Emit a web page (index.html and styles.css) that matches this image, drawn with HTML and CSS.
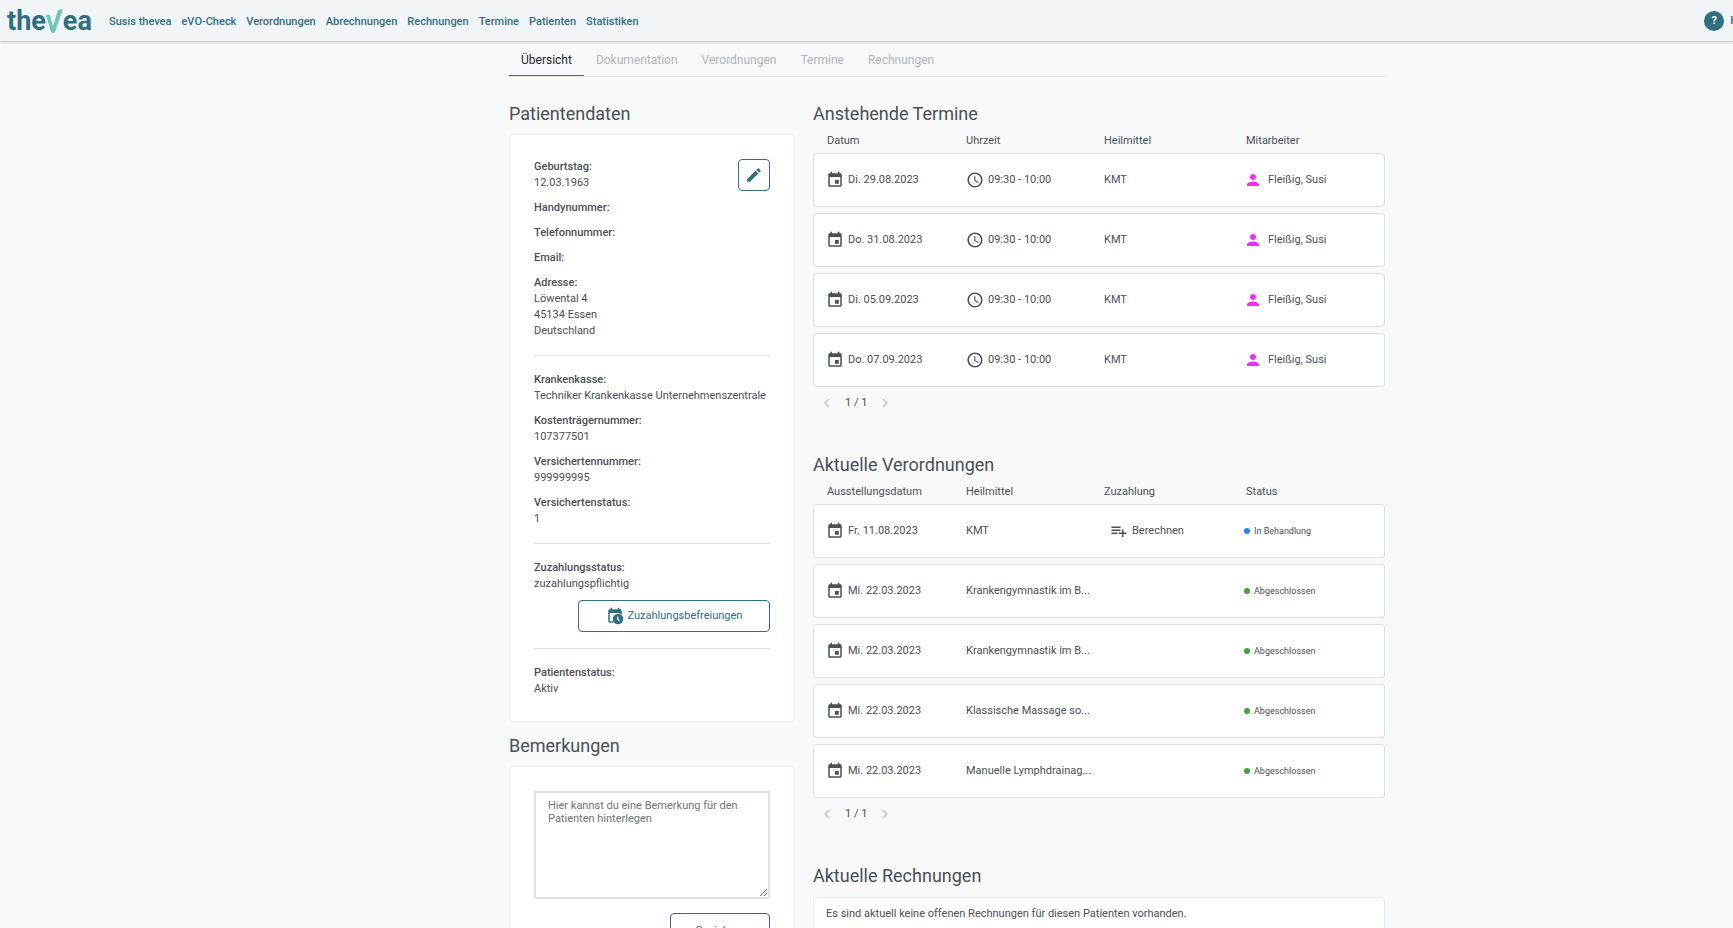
FILE: index.html
```html
<!DOCTYPE html>
<html lang="de">

<head>
    <meta charset="UTF-8">
    <meta name="viewport" content="width=device-width, initial-scale=1.0">
    <title>thevea - Patient</title>
    <link rel="stylesheet" href="styles.css">
</head>

<body>
    <!-- icon sprite -->
    <svg class="sprite" aria-hidden="true">
        <symbol id="calendar" viewBox="0 0 24 24">
            <path d="M17 12h-5v5h5v-5zM16 1v2H8V1H6v2H5c-1.11 0-1.99.9-1.99 2L3 19c0 1.1.89 2 2 2h14c1.1 0 2-.9 2-2V5c0-1.1-.9-2-2-2h-1V1h-2zm3 18H5V8h14v11z" />
        </symbol>
        <symbol id="clock" viewBox="0 0 24 24">
            <path d="M11.99 2C6.47 2 2 6.48 2 12s4.47 10 9.99 10C17.52 22 22 17.52 22 12S17.52 2 11.99 2zM12 20c-4.42 0-8-3.58-8-8s3.58-8 8-8 8 3.58 8 8-3.58 8-8 8zm.5-13H11v6l5.25 3.15.75-1.23-4.5-2.67z" />
        </symbol>
        <symbol id="person" viewBox="0 0 24 24">
            <path d="M12 12c2.21 0 4-1.79 4-4s-1.79-4-4-4-4 1.79-4 4 1.79 4 4 4zm0 2c-2.67 0-8 1.34-8 4v2h16v-2c0-2.66-5.33-4-8-4z" />
        </symbol>
        <symbol id="pencil" viewBox="0 0 24 24">
            <path d="M3 17.25V21h3.75L17.81 9.94l-3.75-3.75L3 17.25zM20.71 7.04c.39-.39.39-1.02 0-1.41l-2.34-2.34c-.39-.39-1.02-.39-1.41 0l-1.83 1.83 3.75 3.75 1.83-1.83z" />
        </symbol>
        <symbol id="playlist" viewBox="0 0 24 24">
            <path d="M14 10H2v2h12v-2zm0-4H2v2h12V6zm4 8v-4h-2v4h-4v2h4v4h2v-4h4v-2h-4zM2 16h8v-2H2v2z" />
        </symbol>
        <symbol id="calendar-clock" viewBox="0 0 24 24">
            <path d="M5 8v11h5v2H5c-1.1 0-2-.9-2-2V5c0-1.1.9-2 2-2h1V1h2v2h8V1h2v2h1c1.1 0 2 .9 2 2v5h-2V8z" />
            <circle cx="16" cy="16" r="7" />
            <path d="M15.7 12.5v4l3 1.7" fill="none" stroke="#fff" stroke-width="1.5" />
        </symbol>
        <symbol id="left" viewBox="0 0 24 24">
            <path d="M15.41 7.41L14 6l-6 6 6 6 1.41-1.41L10.83 12z" />
        </symbol>
        <symbol id="right" viewBox="0 0 24 24">
            <path d="M10 6L8.59 7.41 13.17 12l-4.58 4.59L10 18l6-6z" />
        </symbol>
    </svg>

    <header class="topbar">
        <a class="logo" href="#" aria-label="thevea">
            <span>the</span><svg class="logo-check" viewBox="0 0 17 24"><path d="M0 6h4l3 11L12 1l5-1-8 23q-2 2-4 0z" /></svg><span>ea</span>
        </a>
        <nav class="main-nav">
            <a href="#">Susis thevea</a>
            <a href="#">eVO-Check</a>
            <a href="#">Verordnungen</a>
            <a href="#">Abrechnungen</a>
            <a href="#">Rechnungen</a>
            <a href="#">Termine</a>
            <a href="#">Patienten</a>
            <a href="#">Statistiken</a>
        </nav>
        <a class="help" href="#"><span class="help-icon">?</span>H</a>
    </header>

    <main class="page">
        <div class="content">
            <nav class="tabs">
                <a class="active" href="#">Übersicht</a>
                <a href="#">Dokumentation</a>
                <a href="#">Verordnungen</a>
                <a href="#">Termine</a>
                <a href="#">Rechnungen</a>
            </nav>

            <div class="columns">
                <div class="sidebar">
                    <h2>Patientendaten</h2>
                    <section class="card">
                        <button class="btn edit" type="button" aria-label="Bearbeiten"><svg class="icon"><use href="#pencil" /></svg></button>
                        <dl>
                            <div><dt>Geburtstag:</dt><dd>12.03.1963</dd></div>
                            <div><dt>Handynummer:</dt></div>
                            <div><dt>Telefonnummer:</dt></div>
                            <div><dt>Email:</dt></div>
                            <div><dt>Adresse:</dt><dd>Löwental 4</dd><dd>45134 Essen</dd><dd>Deutschland</dd></div>
                        </dl>
                        <hr>
                        <dl>
                            <div><dt>Krankenkasse:</dt><dd>Techniker Krankenkasse Unternehmenszentrale</dd></div>
                            <div><dt>Kostenträgernummer:</dt><dd>107377501</dd></div>
                            <div><dt>Versichertennummer:</dt><dd>999999995</dd></div>
                            <div><dt>Versichertenstatus:</dt><dd>1</dd></div>
                        </dl>
                        <hr>
                        <dl>
                            <div><dt>Zuzahlungsstatus:</dt><dd>zuzahlungspflichtig</dd></div>
                        </dl>
                        <button class="btn exemption" type="button"><svg class="icon"><use href="#calendar-clock" /></svg>Zuzahlungsbefreiungen</button>
                        <hr>
                        <dl>
                            <div><dt>Patientenstatus:</dt><dd>Aktiv</dd></div>
                        </dl>
                    </section>

                    <h2>Bemerkungen</h2>
                    <section class="card">
                        <textarea aria-label="Bemerkungen" placeholder="Hier kannst du eine Bemerkung für den Patienten hinterlegen"></textarea>
                        <button class="btn save" type="button">Speichern</button>
                    </section>
                </div>

                <div class="lists">
                    <section class="list">
                        <h2>Anstehende Termine</h2>
                        <table>
                            <thead>
                                <tr><th>Datum</th><th>Uhrzeit</th><th>Heilmittel</th><th>Mitarbeiter</th></tr>
                            </thead>
                            <tbody>
                                <tr>
                                    <td><span class="cell date"><svg class="icon"><use href="#calendar" /></svg>Di. 29.08.2023</span></td>
                                    <td><span class="cell"><svg class="icon"><use href="#clock" /></svg>09:30 - 10:00</span></td>
                                    <td>KMT</td>
                                    <td><span class="cell person"><svg class="icon"><use href="#person" /></svg>Fleißig, Susi</span></td>
                                </tr>
                                <tr>
                                    <td><span class="cell date"><svg class="icon"><use href="#calendar" /></svg>Do. 31.08.2023</span></td>
                                    <td><span class="cell"><svg class="icon"><use href="#clock" /></svg>09:30 - 10:00</span></td>
                                    <td>KMT</td>
                                    <td><span class="cell person"><svg class="icon"><use href="#person" /></svg>Fleißig, Susi</span></td>
                                </tr>
                                <tr>
                                    <td><span class="cell date"><svg class="icon"><use href="#calendar" /></svg>Di. 05.09.2023</span></td>
                                    <td><span class="cell"><svg class="icon"><use href="#clock" /></svg>09:30 - 10:00</span></td>
                                    <td>KMT</td>
                                    <td><span class="cell person"><svg class="icon"><use href="#person" /></svg>Fleißig, Susi</span></td>
                                </tr>
                                <tr>
                                    <td><span class="cell date"><svg class="icon"><use href="#calendar" /></svg>Do. 07.09.2023</span></td>
                                    <td><span class="cell"><svg class="icon"><use href="#clock" /></svg>09:30 - 10:00</span></td>
                                    <td>KMT</td>
                                    <td><span class="cell person"><svg class="icon"><use href="#person" /></svg>Fleißig, Susi</span></td>
                                </tr>
                            </tbody>
                        </table>
                        <div class="pager">
                            <button type="button" aria-label="Zurück" disabled><svg class="icon"><use href="#left" /></svg></button>
                            <span>1 / 1</span>
                            <button type="button" aria-label="Weiter" disabled><svg class="icon"><use href="#right" /></svg></button>
                        </div>
                    </section>

                    <section class="list">
                        <h2>Aktuelle Verordnungen</h2>
                        <table>
                            <thead>
                                <tr><th>Ausstellungsdatum</th><th>Heilmittel</th><th>Zuzahlung</th><th>Status</th></tr>
                            </thead>
                            <tbody>
                                <tr>
                                    <td><span class="cell date"><svg class="icon"><use href="#calendar" /></svg>Fr. 11.08.2023</span></td>
                                    <td>KMT</td>
                                    <td><button class="calculate" type="button"><svg class="icon"><use href="#playlist" /></svg>Berechnen</button></td>
                                    <td><span class="status open">In Behandlung</span></td>
                                </tr>
                                <tr>
                                    <td><span class="cell date"><svg class="icon"><use href="#calendar" /></svg>Mi. 22.03.2023</span></td>
                                    <td>Krankengymnastik im B...</td>
                                    <td></td>
                                    <td><span class="status">Abgeschlossen</span></td>
                                </tr>
                                <tr>
                                    <td><span class="cell date"><svg class="icon"><use href="#calendar" /></svg>Mi. 22.03.2023</span></td>
                                    <td>Krankengymnastik im B...</td>
                                    <td></td>
                                    <td><span class="status">Abgeschlossen</span></td>
                                </tr>
                                <tr>
                                    <td><span class="cell date"><svg class="icon"><use href="#calendar" /></svg>Mi. 22.03.2023</span></td>
                                    <td>Klassische Massage so...</td>
                                    <td></td>
                                    <td><span class="status">Abgeschlossen</span></td>
                                </tr>
                                <tr>
                                    <td><span class="cell date"><svg class="icon"><use href="#calendar" /></svg>Mi. 22.03.2023</span></td>
                                    <td>Manuelle Lymphdrainag...</td>
                                    <td></td>
                                    <td><span class="status">Abgeschlossen</span></td>
                                </tr>
                            </tbody>
                        </table>
                        <div class="pager">
                            <button type="button" aria-label="Zurück" disabled><svg class="icon"><use href="#left" /></svg></button>
                            <span>1 / 1</span>
                            <button type="button" aria-label="Weiter" disabled><svg class="icon"><use href="#right" /></svg></button>
                        </div>
                    </section>

                    <section class="list">
                        <h2>Aktuelle Rechnungen</h2>
                        <p class="empty">Es sind aktuell keine offenen Rechnungen für diesen Patienten vorhanden.</p>
                    </section>
                </div>
            </div>
        </div>
    </main>
</body>

</html>
```

FILE: styles.css
```css
* {
    box-sizing: border-box;
}

body {
    margin: 0;
    background: #f8f9fb;
    color: #495057;
    font: 11px/16px Roboto, "Liberation Sans", sans-serif;
}

a {
    color: #2f6f80;
    text-decoration: none;
}

button,
textarea {
    font: inherit;
    color: inherit;
}

.sprite {
    display: none;
}

.icon {
    width: 18px;
    height: 18px;
    fill: currentColor;
    flex: none;
}

/* top bar */
.topbar {
    display: flex;
    align-items: center;
    height: 42px;
    padding-left: 7px;
    overflow: hidden;
    background: #f2f5f8;
    border-bottom: 1px solid #ccd3d6;
    box-shadow: 0 1px 2px rgba(0, 0, 0, 0.12);
    font-weight: 500;
}

.logo {
    display: flex;
    align-items: center;
    width: 86px;
    font: bold 27px/30px "Liberation Sans Narrow", Roboto, sans-serif;
}

.logo-check {
    flex: none;
    width: 17px;
    height: 24px;
    fill: #6fc7b6;
}

.main-nav {
    display: flex;
    gap: 10px;
    margin-left: 16px;
    padding-top: 2px;
}

.help {
    display: flex;
    align-items: center;
    gap: 6px;
    margin: 0 -5px 0 auto;
    white-space: nowrap;
}

.help-icon {
    width: 20px;
    height: 20px;
    border-radius: 50%;
    background: #2f6f80;
    color: #fff;
    font-weight: bold;
    line-height: 20px;
    text-align: center;
}

/* page */
.page {
    display: grid;
    grid-template-columns: 509fr 876fr 348fr;
}

.content {
    grid-column: 2;
}

.tabs {
    display: flex;
    height: 35px;
    border-bottom: 1px solid #e3e7ea;
    font-size: 12px;
    line-height: 36px;
}

.tabs a {
    height: 34px;
    padding: 0 12px;
    color: #adb5bd;
}

.tabs .active {
    border-bottom: 1px solid #2f6f80;
    color: #212529;
}

.columns {
    display: grid;
    grid-template-columns: 1fr 2fr;
    gap: 18px;
    padding-top: 24px;
}

h2 {
    margin: 0;
    font-size: 18px;
    font-weight: normal;
    line-height: 26px;
}

/* patient data */
.card {
    display: flow-root;
    margin: 7px 0 11px;
    padding: 24px;
    background: #fff;
    border: 1px solid #e9ecef;
    border-radius: 4px;
}

dl {
    display: grid;
    gap: 9px;
    margin: 0;
}

dt {
    font-weight: 500;
}

dd {
    margin: 0;
}

hr {
    height: 1px;
    margin: 16px 0;
    border: 0;
    background: #dee2e6;
}

.btn {
    display: flex;
    align-items: center;
    justify-content: center;
    gap: 4px;
    height: 32px;
    background: #fff;
    border: 1px solid #2f6f80;
    border-radius: 4px;
    color: #2f6f80;
}

.edit {
    float: right;
    width: 32px;
    padding: 0;
}

.exemption {
    width: 192px;
    margin: 8px 0 0 auto;
}

.save {
    width: 100px;
    height: 36px;
    margin: 14px 0 0 auto;
}

textarea {
    display: block;
    width: 100%;
    height: 108px;
    padding: 6px 12px;
    background: #fff;
    border: 2px solid #dee2e6;
    line-height: 13px;
}

textarea::placeholder {
    color: #6c757d;
}

/* lists */
.list {
    margin-bottom: 40px;
}

table {
    width: 100%;
    margin-top: 1px;
    table-layout: fixed;
    border-spacing: 0 6px;
}

th {
    height: 13px;
    padding: 1px 0 0;
    font-weight: normal;
    line-height: 12px;
    text-align: left;
}

th:nth-child(1) {
    width: 153px;
}

th:nth-child(2) {
    width: 138px;
}

th:nth-child(3) {
    width: 142px;
}

th:first-child,
td:first-child {
    padding-left: 14px;
}

td {
    height: 54px;
    padding: 0;
    background: #fff;
    border: solid #dee2e6;
    border-width: 1px 0;
    white-space: nowrap;
}

td:first-child {
    border-left-width: 1px;
    border-radius: 4px 0 0 4px;
}

td:last-child {
    border-right-width: 1px;
    border-radius: 0 4px 4px 0;
}

.cell,
.calculate {
    display: flex;
    align-items: center;
    gap: 4px;
}

.date,
.person,
.status {
    margin-left: -2px;
}

.person {
    gap: 6px;
}

.person .icon {
    color: #f02cf5;
}

.calculate {
    padding: 0 6px;
    background: none;
    border: 0;
}

.status {
    display: flex;
    align-items: center;
    gap: 4px;
    font-size: 9px;
}

.status::before {
    width: 6px;
    height: 6px;
    border-radius: 50%;
    background: #43a338;
    content: "";
}

.status.open::before {
    background: #2185f0;
}

.pager {
    display: flex;
    align-items: center;
    gap: 9px;
    padding: 1px 0 0 5px;
}

.pager button {
    display: flex;
    padding: 0;
    background: none;
    border: 0;
    color: #bfc4c8;
}

.empty {
    margin: 8px 0 0;
    padding: 8px 12px 24px;
    background: #fff;
    border: 1px solid #e9ecef;
    border-radius: 4px;
}
```
